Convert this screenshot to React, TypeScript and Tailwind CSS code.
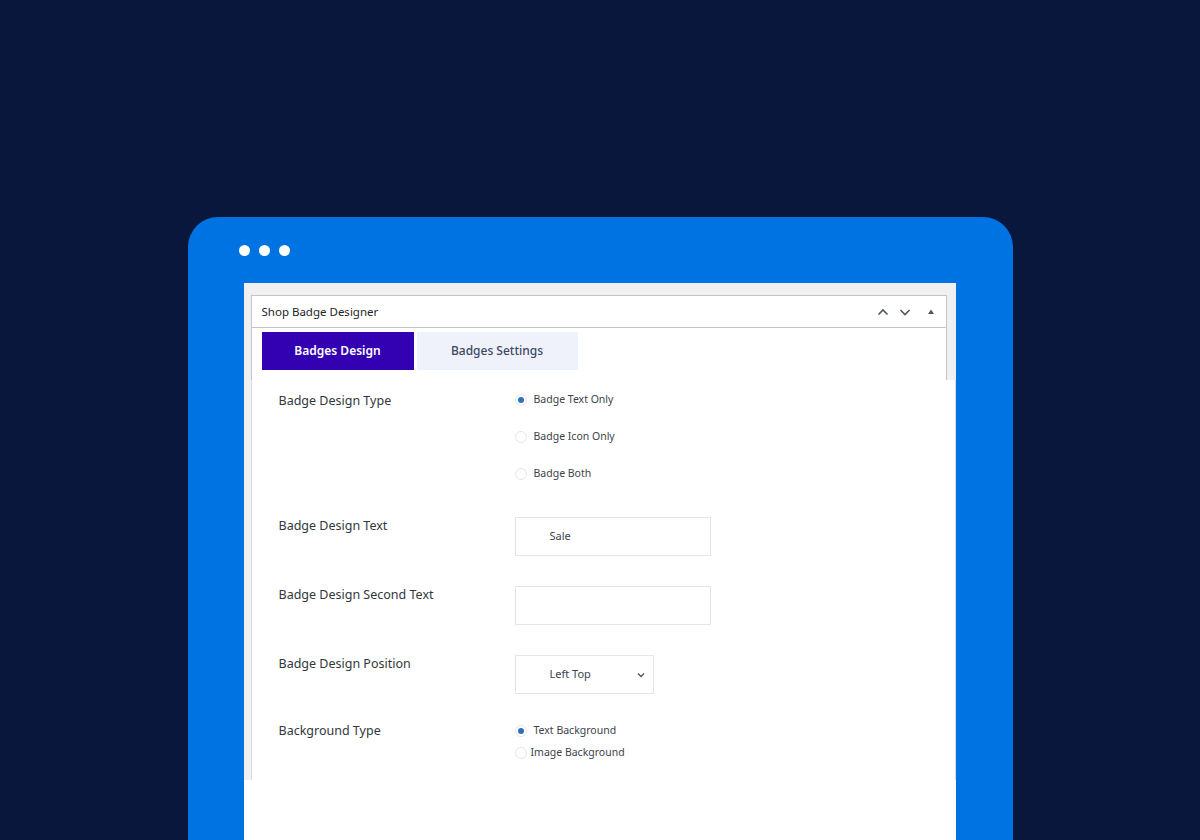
import React from 'react';

const font = { fontFamily: '"Noto Sans", "Open Sans", sans-serif' };

const Radio: React.FC<{ checked?: boolean; label: string; gap?: string }> = ({ checked, label, gap = 'gap-[7px]' }) => (
  <label className={`flex h-[17px] items-center ${gap} text-[10.5px] text-[#3c434a]`}>
    <span className="flex h-[12px] w-[12px] items-center justify-center rounded-full border border-[#e6e6e6] bg-white">
      {checked && <span className="h-[6px] w-[6px] rounded-full bg-[#2f6fba]" />}
    </span>
    <span>{label}</span>
  </label>
);

const FieldRow: React.FC<{ label: string; children: React.ReactNode; className?: string }> = ({ label, children, className = '' }) => (
  <div className={`flex ${className}`}>
    <div className="h-[19px] w-[236px] shrink-0 text-[12.5px] leading-[19px] text-[#32373c]">{label}</div>
    <div>{children}</div>
  </div>
);

export default function App() {
  return (
    <div className="flex h-[840px] w-[1200px] justify-center overflow-hidden bg-[#08173b]" style={font}>
      <div className="mt-[217px] flex w-[825px] flex-col rounded-t-[30px] bg-[#0073e3] pl-[56px]">
        {/* window dots */}
        <div className="flex h-[66px] items-center gap-[9px] pt-[1px]">
          <span className="-ml-[5px] h-[11px] w-[11px] rounded-full bg-white" />
          <span className="h-[11px] w-[11px] rounded-full bg-white" />
          <span className="h-[11px] w-[11px] rounded-full bg-white" />
        </div>

        <div className="flex w-[712px] flex-1 flex-col bg-white">
          {/* metabox top */}
          <div className="bg-[#f0f0f1] pl-[7px] pr-[9px] pt-[12px]">
            <div className="border-x border-t border-[#c3c4c7] bg-white">
              <div className="flex h-[32px] items-center justify-between border-b border-[#c3c4c7] pl-[10px] pr-[11px]">
                <span className="text-[11.5px] text-[#1d2327]">Shop Badge Designer</span>
                <div className="flex items-center text-[#50575e]">
                  <svg width="14" height="14" viewBox="0 0 14 14" fill="none" stroke="currentColor" strokeWidth="1.6">
                    <path d="M2.5 9.5 7 5l4.5 4.5" />
                  </svg>
                  <svg className="ml-[8px]" width="14" height="14" viewBox="0 0 14 14" fill="none" stroke="currentColor" strokeWidth="1.6">
                    <path d="M2.5 5 7 9.5 11.5 5" />
                  </svg>
                  <svg className="ml-[15px]" width="8" height="8" viewBox="0 0 8 8" fill="currentColor">
                    <path d="M4 1.5 7 6H1z" />
                  </svg>
                </div>
              </div>
              <div className="flex gap-[3px] pb-[10px] pl-[10px] pt-[4px]">
                <div className="flex h-[38px] w-[152px] items-center justify-center bg-[#3300b2] text-[12px] font-semibold text-white">
                  Badges Design
                </div>
                <div className="flex h-[38px] w-[161px] items-center justify-center bg-[#eff2fb] text-[12px] font-medium text-[#3b4863]">
                  Badges Settings
                </div>
              </div>
            </div>
          </div>

          {/* metabox body */}
          <div className="flex h-[400px]">
            <div className="w-[7px] bg-[#f0f0f1]" />
            <div className="flex-1 border-l border-r border-[#dcdcde] pl-[27px] pt-[11px]">
              <FieldRow label="Badge Design Type">
                <div className="flex flex-col gap-[20px]">
                  <Radio checked label="Badge Text Only" />
                  <Radio label="Badge Icon Only" />
                  <Radio label="Badge Both" />
                </div>
              </FieldRow>

              <FieldRow label="Badge Design Text" className="mt-[34px]">
                <div className="mt-[1px] flex h-[39px] w-[196px] items-center border border-[#e5e5e5] pl-[34px] text-[11px] text-[#3c434a]">
                  Sale
                </div>
              </FieldRow>

              <FieldRow label="Badge Design Second Text" className="mt-[29px]">
                <div className="mt-[1px] h-[39px] w-[196px] border border-[#e5e5e5]" />
              </FieldRow>

              <FieldRow label="Badge Design Position" className="mt-[29px]">
                <div className="mt-[1px] flex h-[39px] w-[139px] items-center justify-between border border-[#e5e5e5] pl-[34px] pr-[6px] text-[11px] text-[#3c434a]">
                  <span>Left Top</span>
                  <svg width="12" height="12" viewBox="0 0 12 12" fill="none" stroke="#50575e" strokeWidth="1.4">
                    <path d="M3 4.5 6 7.5 9 4.5" />
                  </svg>
                </div>
              </FieldRow>

              <FieldRow label="Background Type" className="mt-[27px]">
                <div className="flex flex-col gap-[5px] pt-[1px]">
                  <Radio checked label="Text Background" />
                  <Radio label="Image Background" gap="gap-[4px]" />
                </div>
              </FieldRow>
            </div>
          </div>
        </div>
      </div>
    </div>
  );
}
